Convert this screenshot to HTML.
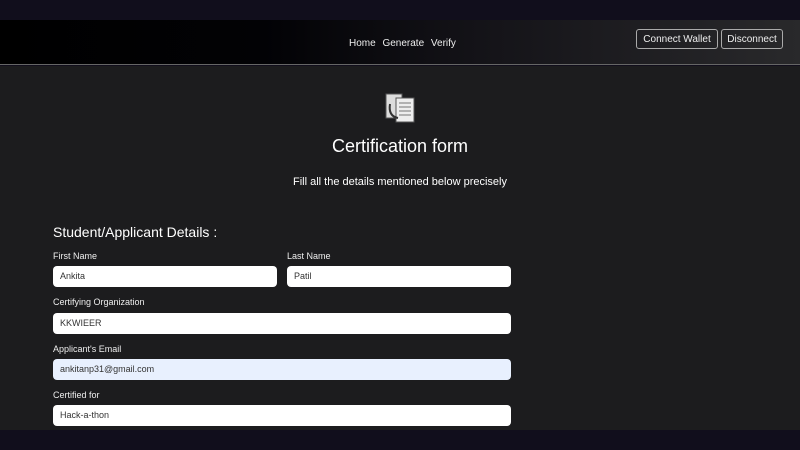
<!DOCTYPE html>
<html><head><style>
*{margin:0;padding:0;box-sizing:border-box}
body{width:800px;height:450px;background:#110e1c;font-family:"Liberation Sans",sans-serif;color:#fff;position:relative;overflow:hidden}
.hdr{position:absolute;top:20px;left:0;width:800px;height:45px;background:linear-gradient(90deg,#000 0%,#020205 33%,#141318 60%,#29292b 100%);border-bottom:1px solid #666}
.nav{position:absolute;left:349px;top:18px;font-size:10px;color:#eee;word-spacing:4px}
.btn{position:absolute;top:9px;height:20px;border:1px solid #aaa;border-radius:3px;font-size:10px;color:#eee;display:flex;align-items:center;justify-content:center}
.main{position:absolute;top:66px;left:0;width:800px;height:364px;background:#1c1c1e}
.t{position:absolute;width:800px;text-align:center}
.lbl{position:absolute;font-size:9px;color:#eee}
.in{position:absolute;height:21px;background:#fff;border-radius:4px;font-size:9px;color:#333;padding-left:7px;line-height:21px}
</style></head><body>
<div class="hdr">
<div class="nav">Home Generate Verify</div>
<div class="btn" style="left:636px;width:82px">Connect Wallet</div>
<div class="btn" style="left:721px;width:62px">Disconnect</div>
</div>
<div class="main">
<svg style="position:absolute;left:384px;top:26px" width="40" height="32" viewBox="0 0 40 32">
<rect x="2" y="2" width="16" height="24" fill="#ddd" stroke="#555"/>
<rect x="12" y="6" width="18" height="24" fill="#eee" stroke="#555"/>
<g stroke="#777"><line x1="15" y1="11" x2="27" y2="11"/><line x1="15" y1="15" x2="27" y2="15"/><line x1="15" y1="19" x2="27" y2="19"/><line x1="15" y1="23" x2="27" y2="23"/></g>
<path d="M6 12 Q4 24 14 26" stroke="#333" stroke-width="2" fill="none"/>
</svg>
<div class="t" style="top:70px;font-size:18px">Certification form</div>
<div class="t" style="top:110px;font-size:11px">Fill all the details mentioned below precisely</div>
<div style="position:absolute;left:53px;top:158px;font-size:14px">Student/Applicant Details :</div>
<div class="lbl" style="left:53px;top:185px">First Name</div>
<div class="lbl" style="left:287px;top:185px">Last Name</div>
<div class="in" style="left:53px;top:200px;width:224px">Ankita</div>
<div class="in" style="left:287px;top:200px;width:224px">Patil</div>
<div class="lbl" style="left:53px;top:231px">Certifying Organization</div>
<div class="in" style="left:53px;top:247px;width:458px">KKWIEER</div>
<div class="lbl" style="left:53px;top:278px">Applicant's Email</div>
<div class="in" style="left:53px;top:293px;width:458px;background:#e8f0fe">ankitanp31@gmail.com</div>
<div class="lbl" style="left:53px;top:324px">Certified for</div>
<div class="in" style="left:53px;top:339px;width:458px">Hack-a-thon</div>
</div>
</body></html>
